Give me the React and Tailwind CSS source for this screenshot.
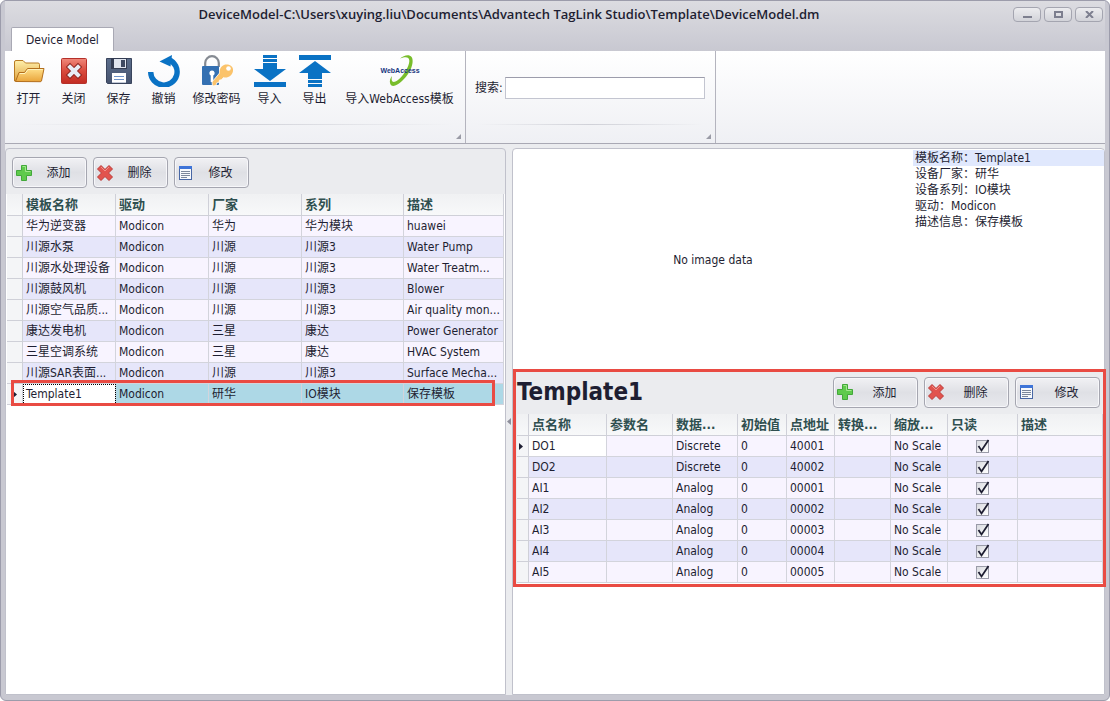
import { useState } from "react";

const templates = [
  ["华为逆变器", "Modicon", "华为", "华为模块", "huawei"],
  ["川源水泵", "Modicon", "川源", "川源3", "Water Pump"],
  ["川源水处理设备", "Modicon", "川源", "川源3", "Water Treatm..."],
  ["川源鼓风机", "Modicon", "川源", "川源3", "Blower"],
  ["川源空气品质...", "Modicon", "川源", "川源3", "Air quality mon..."],
  ["康达发电机", "Modicon", "三星", "康达", "Power Generator"],
  ["三星空调系统", "Modicon", "三星", "康达", "HVAC System"],
  ["川源SAR表面...", "Modicon", "川源", "川源3", "Surface Mecha..."],
  ["Template1", "Modicon", "研华", "IO模块", "保存模板"],
];

const points = [
  ["DO1", "Discrete", "40001"],
  ["DO2", "Discrete", "40002"],
  ["AI1", "Analog", "00001"],
  ["AI2", "Analog", "00002"],
  ["AI3", "Analog", "00003"],
  ["AI4", "Analog", "00004"],
  ["AI5", "Analog", "00005"],
];

const details = [
  "模板名称：Template1",
  "设备厂家：研华",
  "设备系列：IO模块",
  "驱动：Modicon",
  "描述信息：保存模板",
];

function OpenIcon() {
  return (
    <svg viewBox="0 0 32 32" className="size-8" aria-hidden="true">
      <defs>
        <linearGradient id="folderBack" x1="0" y1="0" x2="0" y2="1">
          <stop offset="0" stopColor="#fff0ac" />
          <stop offset="1" stopColor="#dfa23c" />
        </linearGradient>
        <linearGradient id="folderFront" x1="0" y1="0" x2="0" y2="1">
          <stop offset="0" stopColor="#ffe08a" />
          <stop offset="1" stopColor="#e9a43a" />
        </linearGradient>
      </defs>
      <path d="M1.500 26V7q0-1.500 1.500-1.500h7l2.500 2.500h12.500q1.500 0 1.500 1.500V24z" fill="url(#folderBack)" stroke="#b87a22" />
      <path d="M2.500 26.500 6 17.500h5.500l3-4H31L28.500 26q-.3.700-1.300.7z" fill="url(#folderFront)" stroke="#b36e1c" />
      <path d="M6.800 18.500H12l3-4h14.800" fill="none" stroke="#fff3bd" />
    </svg>
  );
}

function CloseIcon() {
  return (
    <svg viewBox="0 0 32 32" className="size-8" aria-hidden="true">
      <defs>
        <linearGradient id="closeRed" x1="0" y1="0" x2="0" y2="1">
          <stop offset="0" stopColor="#f0897b" />
          <stop offset=".5" stopColor="#d94a3d" />
          <stop offset="1" stopColor="#c22b22" />
        </linearGradient>
      </defs>
      <rect x="3.500" y="3.500" width="25" height="25" rx="1" fill="url(#closeRed)" stroke="#b5302a" />
      <path d="m12 12 8 8m0-8-8 8" stroke="#8d2722" strokeWidth="6" strokeLinecap="square" />
      <path d="m12 12 8 8m0-8-8 8" stroke="#e9edf5" strokeWidth="4" strokeLinecap="square" />
    </svg>
  );
}

function SaveIcon() {
  return (
    <svg viewBox="0 0 32 32" className="size-8" aria-hidden="true">
      <defs>
        <linearGradient id="disk" x1="0" y1="0" x2="0" y2="1">
          <stop offset="0" stopColor="#5c6e8c" />
          <stop offset="1" stopColor="#46536e" />
        </linearGradient>
      </defs>
      <path d="M3.500 3.500h25v25h-24l-1-1z" fill="url(#disk)" stroke="#39445c" />
      <rect x="8" y="3" width="16" height="11" fill="#333c52" />
      <rect x="11" y="4" width="12" height="9" fill="#dfe4ee" />
      <rect x="18" y="5" width="4" height="7" fill="#3e4961" />
      <rect x="9" y="18" width="14" height="10" fill="#fff" />
      <path d="M11 21.500h10M11 24.500h10" stroke="#6f93c8" />
      <path d="M9 27.500h14" stroke="#c3cad8" />
    </svg>
  );
}

function UndoIcon() {
  return (
    <svg viewBox="0 0 32 32" className="size-8" aria-hidden="true">
      <path d="M2.700 17A13.200 13.200 0 1 0 21 4.700" fill="none" stroke="#0a72c4" strokeWidth="5.400" />
      <path d="M11.500 6.500 24 0l-1.500 11.500z" fill="#0a72c4" />
    </svg>
  );
}

function PasswordIcon() {
  return (
    <svg viewBox="0 0 32 32" className="size-8" aria-hidden="true">
      <path d="M4.200 12V8a6.800 6.800 0 0 1 13.600 0v4" fill="none" stroke="#858a92" strokeWidth="2.200" />
      <rect x="1" y="11" width="17" height="19" rx="1" fill="#3470b2" />
      <path d="M11 15.500a2.600 2.600 0 0 1 1.300 4.900V27H9.700v-6.600A2.600 2.600 0 0 1 11 15.500z" fill="#fff" />
      <path d="M19 17.500 11 27l.5 4 3.500-.5.800-2.700 2-.3.700-2.300 2-.5 3.500-3.700z" fill="#fbc36b" stroke="#fff" strokeWidth=".8" />
      <path d="M25.500 9.500c4 0 7 2.500 6.500 6.500s-4.500 7-8.500 6.500-5.500-3.500-4.800-7 3.300-6 6.800-6z" fill="#fbc36b" />
      <circle cx="27.500" cy="13.500" r="2.300" fill="#fff" />
    </svg>
  );
}

function ImportIcon() {
  return (
    <svg viewBox="0 0 32 32" className="size-8" aria-hidden="true">
      <path d="M9 0h14v3H9zM9 4h14v3H9zM9 8h14v6h9L16 26 0 14h9zM0 27h32v5H0z" fill="#0a72c4" />
    </svg>
  );
}

function ExportIcon() {
  return (
    <svg viewBox="0 0 32 32" className="size-8" aria-hidden="true">
      <path d="M0 0h32v5H0zM16 6l16 12h-9v6H9v-6H0zM9 25h14v3H9zM9 29h14v3H9z" fill="#0a72c4" />
    </svg>
  );
}

function WebAccessIcon() {
  return (
    <svg viewBox="0 0 32 32" className="size-8 overflow-visible" aria-hidden="true">
      <path d="M16 3.500C21-1 30-2 28.500 8c-.8 6-5 13-10.500 18-5 5-11 7-12 2-.6-2.500.5-5 2-7-1 4 0 7 3.500 5.500 4-1.500 9-8 12-14C27 5 26-.5 16 3.500z" fill="#78bd2b" />
      <text x="16" y="18" textAnchor="middle" fontSize="7" fontWeight="700" fontFamily="Liberation Sans, sans-serif" fill="#17357f">
        WebAccess
      </text>
    </svg>
  );
}

function AddIcon() {
  return (
    <svg viewBox="0 0 16 16" className="size-4 shrink-0" aria-hidden="true">
      <path d="M5.500.5h5v5h5v5h-5v5h-5v-5h-5v-5h5z" fill="#5fca4c" stroke="#42a83a" />
      <path d="M6.500 1.500h3v5h5" fill="none" stroke="#a2e88d" />
    </svg>
  );
}

function DeleteIcon() {
  return (
    <svg viewBox="0 0 16 16" className="size-4 shrink-0" aria-hidden="true">
      <path d="M4 .5 8 4.500l4-4L15.500 4l-4 4 4 4-3.500 3.500-4-4-4 4L.5 12l4-4-4-4z" fill="#e2534d" stroke="#bb3a38" />
      <path d="M4 2 8 6l4-4" fill="none" stroke="#f09089" />
    </svg>
  );
}

function EditIcon() {
  return (
    <svg viewBox="0 0 16 16" className="size-4 shrink-0" aria-hidden="true">
      <rect x="1.500" y="1.500" width="12" height="13" fill="#f7f9fc" stroke="#4867a5" />
      <path d="M1 1h13v3H1z" fill="#3e74d8" />
      <path d="M3 6.500h9M3 8.500h9M3 10.500h9M3 12.500h6" stroke="#7c879b" />
    </svg>
  );
}

function RibbonButton({ icon, label, className }) {
  return (
    <button type="button" className={`flex flex-col items-center gap-1 ${className}`}>
      {icon}
      <span className="whitespace-nowrap leading-4">{label}</span>
    </button>
  );
}

function RibbonGroup({ children, className, bodyClassName }) {
  return (
    <div className={`flex flex-col border-r border-[#b4b4be] ${className}`}>
      <div className={`flex flex-1 ${bodyClassName}`}>{children}</div>
      <div className="mx-3 h-px bg-linear-to-r from-transparent via-[#d0d1d8] to-transparent" />
      <div className="flex h-[18px] items-end justify-end p-1">
        <svg viewBox="0 0 5 5" className="size-[5px]" aria-hidden="true">
          <path d="M5 0v5H0z" fill="#9a9ba6" />
        </svg>
      </div>
    </div>
  );
}

function ToolButton({ icon, label, className }) {
  return (
    <button
      type="button"
      className={`flex h-[31px] items-center rounded-sm border border-[#a5a6b0] bg-linear-to-b from-[#f1f1f4] via-[#dfe0e5] to-[#e8e9ed] pl-[3px] shadow-[inset_0_0_0_1px_#f7f7fa] ${className}`}
    >
      {icon}
      <span className="flex-1 pt-px pr-px text-center">{label}</span>
    </button>
  );
}

function Toolbar({ buttonClassName }) {
  return (
    <div className="flex gap-[6px]">
      <ToolButton className={buttonClassName} icon={<AddIcon />} label="添加" />
      <ToolButton className={buttonClassName} icon={<DeleteIcon />} label="删除" />
      <ToolButton className={buttonClassName} icon={<EditIcon />} label="修改" />
    </div>
  );
}

function HeadCell({ children }) {
  return (
    <th scope="col" className="truncate border-r border-b border-[#cfd0d8] px-[3px] text-left text-[13px] font-bold text-[#2f4f4f]">
      {children}
    </th>
  );
}

function Cell({ children, className = "" }) {
  return <td className={`truncate border-r border-b border-[#d3d4dc] px-[3px] ${className}`}>{children}</td>;
}

function RowMarker({ active, children }) {
  return (
    <td className="border-r border-b border-[#cfd0d8] bg-[#f4f5f7] p-0">
      {active && (
        <svg viewBox="0 0 4 7" className="ml-auto mr-[5px] h-[7px] w-1" aria-label="当前行">
          <path d="M0 0v7l4-3.500z" fill="#1e1e32" />
        </svg>
      )}
      {children}
    </td>
  );
}

function ReadOnlyBox({ label }) {
  const [checked, setChecked] = useState(true);
  return (
    <label className="relative inline-flex align-middle">
      <input
        type="checkbox"
        aria-label={label}
        checked={checked}
        onChange={(e) => setChecked(e.target.checked)}
        className="size-[13px] appearance-none border border-[#9a9ba8] bg-linear-to-br from-[#d9dae0] to-white"
      />
      {checked && (
        <svg viewBox="0 0 13 13" className="pointer-events-none absolute inset-0 size-[13px] overflow-visible" aria-hidden="true">
          <path d="m2.500 6 3 4.500L12.500 0" fill="none" stroke="#1e1e32" strokeWidth="1.800" />
        </svg>
      )}
    </label>
  );
}

function TemplateTable() {
  return (
    <table className="w-full table-fixed border-separate border-spacing-0">
      <colgroup>
        <col className="w-4" />
        <col className="w-[93px]" />
        <col className="w-[93px]" />
        <col className="w-[93px]" />
        <col className="w-[102px]" />
        <col />
      </colgroup>
      <thead>
        <tr className="h-[22px] bg-linear-to-b from-[#f0f1f3] to-[#f8f9fa]">
          <HeadCell />
          <HeadCell>模板名称</HeadCell>
          <HeadCell>驱动</HeadCell>
          <HeadCell>厂家</HeadCell>
          <HeadCell>系列</HeadCell>
          <HeadCell>描述</HeadCell>
        </tr>
      </thead>
      <tbody>
        {templates.map((row, i) => {
          const selected = row[0] === "Template1";
          const tone = selected ? "bg-[#add8e6]" : i % 2 ? "bg-[#e6e6fa]" : "bg-[#f8f4ff]";
          return (
            <tr key={row[0]} className={`relative h-[21px] ${tone}`}>
              <RowMarker active={selected}>
                {selected && (
                  <span className="pointer-events-none absolute -top-1 -bottom-px left-1 right-[9px] border-3 border-[#e94b43]" />
                )}
              </RowMarker>
              {row.map((value, c) => (
                <Cell key={c} className={selected && c === 0 ? "bg-white outline-1 -outline-offset-1 outline-dotted outline-black" : ""}>
                  {value}
                </Cell>
              ))}
            </tr>
          );
        })}
      </tbody>
    </table>
  );
}

function PointTable() {
  return (
    <table className="w-full table-fixed border-separate border-spacing-0">
      <colgroup>
        <col className="w-3" />
        <col className="w-[78px]" />
        <col className="w-[66px]" />
        <col className="w-[65px]" />
        <col className="w-[49px]" />
        <col className="w-12" />
        <col className="w-14" />
        <col className="w-[57px]" />
        <col className="w-[70px]" />
        <col />
      </colgroup>
      <thead>
        <tr className="h-[22px] bg-linear-to-b from-[#f0f1f3] to-[#f8f9fa]">
          <HeadCell />
          <HeadCell>点名称</HeadCell>
          <HeadCell>参数名</HeadCell>
          <HeadCell>数据...</HeadCell>
          <HeadCell>初始值</HeadCell>
          <HeadCell>点地址</HeadCell>
          <HeadCell>转换...</HeadCell>
          <HeadCell>缩放...</HeadCell>
          <HeadCell>只读</HeadCell>
          <HeadCell>描述</HeadCell>
        </tr>
      </thead>
      <tbody>
        {points.map(([name, type, address], i) => (
          <tr key={name} className={`h-[21px] ${i % 2 ? "bg-[#e6e6fa]" : "bg-[#f8f4ff]"}`}>
            <RowMarker active={i === 0} />
            <Cell className={i === 0 ? "bg-white" : ""}>{name}</Cell>
            <Cell />
            <Cell>{type}</Cell>
            <Cell>0</Cell>
            <Cell>{address}</Cell>
            <Cell />
            <Cell>No Scale</Cell>
            <td className="border-r border-b border-[#d3d4dc] p-0 text-center leading-none">
              <ReadOnlyBox label={`${name} 只读`} />
            </td>
            <Cell />
          </tr>
        ))}
      </tbody>
    </table>
  );
}

function WindowButton({ label, children }) {
  return (
    <button
      type="button"
      aria-label={label}
      className="flex h-[15px] w-7 items-center justify-center rounded-sm border border-[#a4a5b0] bg-linear-to-b from-[#ececef] to-[#d2d3d9]"
    >
      <svg viewBox="0 0 9 7" className="h-[7px] w-[9px]" fill="none" stroke="#7d7f8f" strokeWidth="2" aria-hidden="true">
        {children}
      </svg>
    </button>
  );
}

export default function App() {
  return (
    <div className="flex min-h-screen flex-col rounded-md border border-[#9c9cab] bg-[#c8c8d1] px-1 pb-[5px] font-['DejaVu_Sans_Condensed','Noto_Sans_CJK_SC',sans-serif] text-xs text-[#1e1e32]">
      <header className="flex flex-col bg-linear-to-b from-[#dcdce1] to-[#c8c8d1]">
        <div className="flex h-[26px] items-center">
          <h1 className="flex-1 text-center font-['Open_Sans',sans-serif] text-[13px] leading-4 font-semibold">
            DeviceModel-C:\Users\xuying.liu\Documents\Advantech TagLink Studio\Template\DeviceModel.dm
          </h1>
          <div className="flex gap-[3px] pr-[2px]">
            <WindowButton label="最小化">
              <path d="M0 6h9" />
            </WindowButton>
            <WindowButton label="最大化">
              <path d="M1 1h7v5H1z" />
            </WindowButton>
            <WindowButton label="关闭窗口">
              <path d="m1 0 7 7M8 0 1 7" />
            </WindowButton>
          </div>
        </div>
        <nav className="flex px-[6px]">
          <button type="button" className="h-6 rounded-t-xs border border-b-0 border-[#a9a9b4] bg-white px-[14px]">
            Device Model
          </button>
        </nav>
      </header>

      <div className="flex h-[93px] border-b border-[#a9a9b4] bg-linear-to-b from-white to-[#eff0f4]">
        <RibbonGroup className="w-[461px]" bodyClassName="items-start pt-1 pl-px">
          <RibbonButton className="w-[45px]" icon={<OpenIcon />} label="打开" />
          <RibbonButton className="w-[45px]" icon={<CloseIcon />} label="关闭" />
          <RibbonButton className="w-[45px]" icon={<SaveIcon />} label="保存" />
          <RibbonButton className="w-[45px]" icon={<UndoIcon />} label="撤销" />
          <RibbonButton className="w-[61px]" icon={<PasswordIcon />} label="修改密码" />
          <RibbonButton className="w-[45px]" icon={<ImportIcon />} label="导入" />
          <RibbonButton className="w-[45px]" icon={<ExportIcon />} label="导出" />
          <RibbonButton className="w-[125px]" icon={<WebAccessIcon />} label="导入WebAccess模板" />
        </RibbonGroup>
        <RibbonGroup className="w-[250px]" bodyClassName="items-center gap-[2px] pr-[10px] pl-[9px]">
          <label htmlFor="search" className="whitespace-nowrap">
            搜索:
          </label>
          <input
            id="search"
            type="text"
            className="h-[22px] w-full min-w-0 border border-[#c3c5d0] border-t-[#9c9cab] bg-white px-1"
          />
        </RibbonGroup>
      </div>

      <main className="flex flex-1 bg-[#ebecef] pt-1">
        <section className="flex w-[501px] shrink-0 flex-col rounded-t-sm border border-[#c0c1cb] bg-[#ebecef]">
          <div className="px-[6px] pt-2 pb-[6px]">
            <Toolbar buttonClassName="w-[75px]" />
          </div>
          <div className="flex-1 bg-white px-px">
            <TemplateTable />
          </div>
        </section>

        <div className="flex w-[6px] items-center">
          <svg viewBox="0 0 4 7" className="ml-px h-[7px] w-1" aria-hidden="true">
            <path d="M4 0v7L0 3.500z" fill="#8d8e9b" />
          </svg>
        </div>

        <div className="flex min-w-0 flex-1 flex-col rounded-t-sm border border-[#c0c1cb] bg-white">
          <section className="flex h-[221px]">
            <p className="flex flex-1 items-center justify-center">No image data</p>
            <ul className="w-[191px] pt-px leading-4">
              {details.map((line, i) => (
                <li key={line} className={`pl-[2px] ${i === 0 ? "bg-[#e0e8fd]" : ""}`}>
                  {line}
                </li>
              ))}
            </ul>
          </section>
          <section className="relative bg-[#ebecef] pl-1">
            <div className="flex h-[44px] items-center justify-between pr-1">
              <h2 className="text-2xl leading-8 font-bold">Template1</h2>
              <Toolbar buttonClassName="w-[85px]" />
            </div>
            <div className="bg-white pr-px pb-[3px]">
              <PointTable />
            </div>
            <span className="pointer-events-none absolute -top-px -bottom-px left-0 -right-[2px] border-3 border-[#e94b43]" />
          </section>
        </div>
      </main>
    </div>
  );
}
